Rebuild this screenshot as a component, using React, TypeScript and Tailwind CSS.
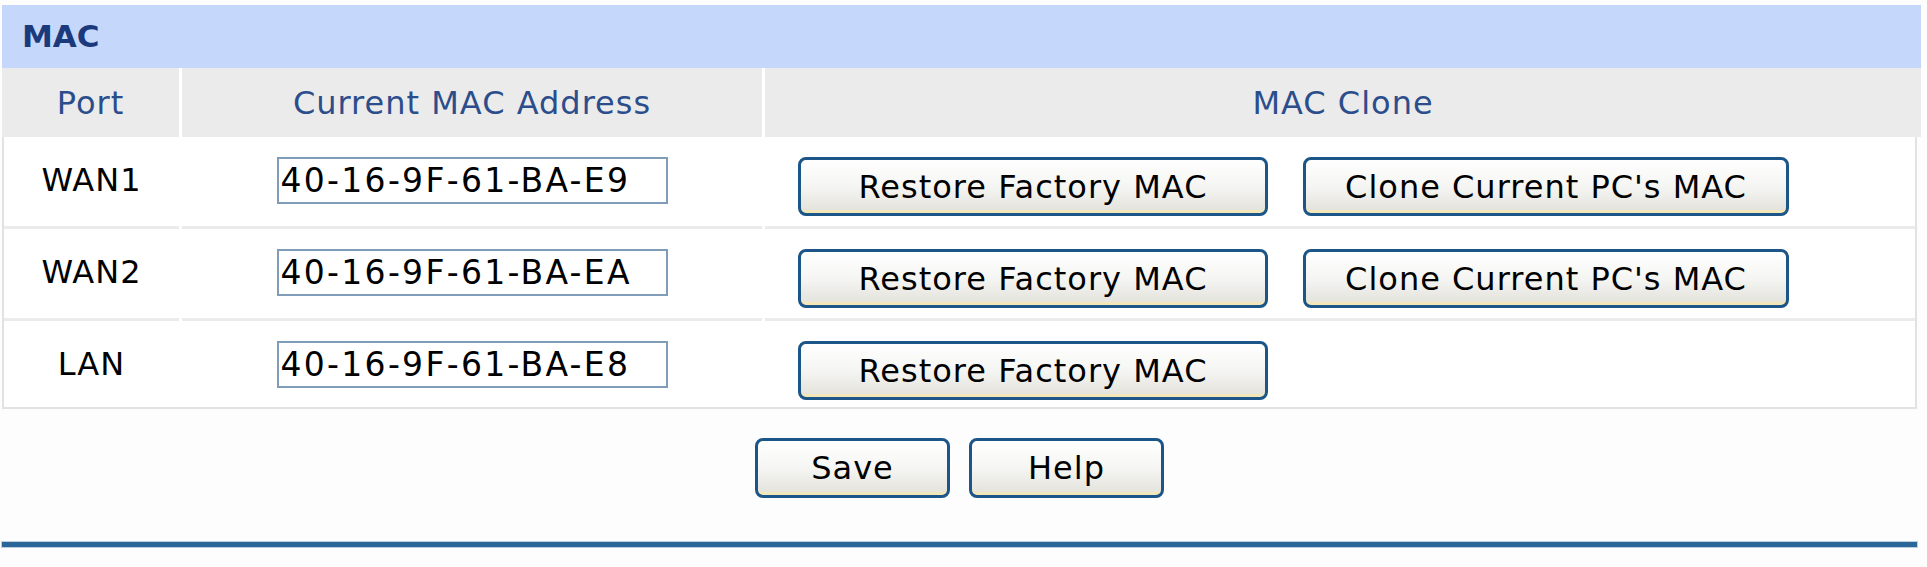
const FONT = "font-['DejaVu_Sans','Verdana','Liberation_Sans',sans-serif]";

type Port = {
  name: string;
  mac: string;
  canClone: boolean;
};

const ports: Port[] = [
  { name: "WAN1", mac: "40-16-9F-61-BA-E9", canClone: true },
  { name: "WAN2", mac: "40-16-9F-61-BA-EA", canClone: true },
  { name: "LAN", mac: "40-16-9F-61-BA-E8", canClone: false },
];

function XpButton({ label, width }: { label: string; width: string }) {
  return (
    <button
      type="button"
      className={`${width} shrink-0 rounded-[8px] border-[3px] border-[#1c5587] bg-gradient-to-b from-[#ffffff] via-[#f5f5f3] to-[#e2e1da] text-[32px] leading-none tracking-[1px] text-black shadow-[inset_0_-5px_0_-2px_#f3e6b9]`}
    >
      {label}
    </button>
  );
}

function PortRow({ port, last }: { port: Port; last: boolean }) {
  const cell = last ? "" : "border-b-[3px] border-[#ebebeb]";
  return (
    <div className={`grid grid-cols-[175px_580px_1fr] gap-x-[3px] ${last ? "h-[86px]" : "h-[92px]"}`}>
      <div className={`flex items-start justify-center pt-[27px] text-[32px] leading-none tracking-[1px] text-black ${cell}`}>
        {port.name}
      </div>
      <div className={`flex justify-center pt-[20px] ${cell}`}>
        <input
          readOnly
          value={port.mac}
          className="h-[47px] w-[391px] border-2 border-[#7f9db9] bg-white pl-[2px] text-[33px] leading-none tracking-[2.3px] text-black outline-none"
        />
      </div>
      <div className={`flex items-start gap-[35px] pl-[33px] pt-[20px] ${cell}`}>
        <XpButton label="Restore Factory MAC" width="w-[470px] h-[59px]" />
        {port.canClone && <XpButton label="Clone Current PC's MAC" width="w-[486px] h-[59px]" />}
      </div>
    </div>
  );
}

export default function App() {
  return (
    <div className={`min-h-[567px] w-[1927px] bg-[#fdfdfd] pt-[5px] ${FONT}`}>
      <div className="ml-[2px] w-[1919px]">
        {/* Section title */}
        <div className="flex h-[63px] items-center bg-[#c5d8fc] pl-[20px] text-[31px] font-bold text-[#1b3a7c]">
          MAC
        </div>

        {/* Column headers */}
        <div className="grid h-[69px] grid-cols-[177px_580px_1fr] gap-x-[3px] bg-white text-[32px] tracking-[1px] text-[#2b4d8c]">
          <div className="flex items-center justify-center bg-[#ebebeb]">Port</div>
          <div className="flex items-center justify-center bg-[#ebebeb]">Current MAC Address</div>
          <div className="flex items-center justify-center bg-[#ebebeb]">MAC Clone</div>
        </div>

        {/* Port rows */}
        <div className="w-[1915px] border-x-2 border-b-2 border-[#e2e2e2] bg-white">
          {ports.map((p, i) => (
            <PortRow key={p.name} port={p} last={i === ports.length - 1} />
          ))}
        </div>

        {/* Actions */}
        <div className="flex w-[1915px] justify-center gap-[19px] pt-[29px]">
          <XpButton label="Save" width="w-[195px] h-[60px]" />
          <XpButton label="Help" width="w-[195px] h-[60px]" />
        </div>

        <div className="mt-[44px] h-[5px] w-[1915px] bg-[#2b6699] shadow-[0_0_0_1px_#b9cfe2]" />
      </div>
    </div>
  );
}
